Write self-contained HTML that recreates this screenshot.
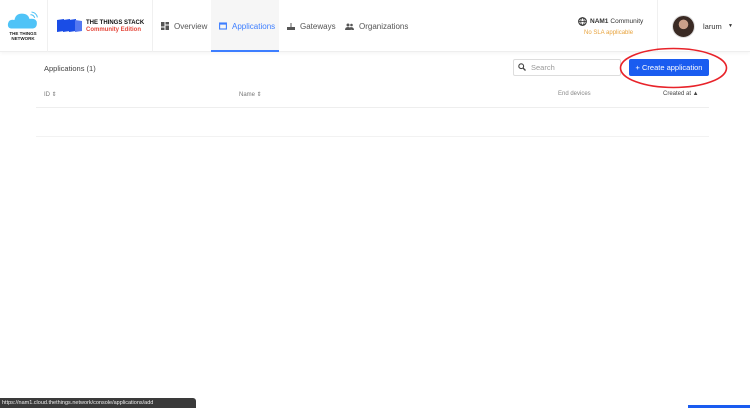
<!DOCTYPE html>
<html><head><meta charset="utf-8"><style>
*{margin:0;padding:0;box-sizing:border-box}
body{width:750px;height:408px;overflow:hidden;background:#fff;font-family:"Liberation Sans",sans-serif;position:relative;color:#333}
.hdr{position:absolute;left:0;top:0;width:750px;height:52px;background:#fff;border-bottom:1px solid #eee;box-shadow:0 1px 4px rgba(0,0,0,.05)}
.vl{position:absolute;top:0;height:52px;width:1px;background:#f0f0f0}
.nav{position:absolute;top:0;height:52px;display:flex;align-items:center;font-size:8px;color:#555}
.abs{position:absolute}
</style></head><body>
<div class="hdr">
  <svg class="abs" style="left:7px;top:10px" width="32" height="20" viewBox="0 0 30 18">
    <path d="M5 17 Q0 17 1 12 Q2 8 7 9 Q8 3 14 3 Q20 3 21 8 Q28 7 28 12 Q28 17 23 17Z" fill="#4fc3f7"/>
    <path d="M22 4 Q25 4 26 7 M23 1.5 Q27.5 2 28.5 6.5" stroke="#4fc3f7" stroke-width="1" fill="none"/>
  </svg>
  <div class="abs" style="left:7px;top:31px;font-size:4.5px;font-weight:bold;line-height:5px;text-align:center;width:32px;color:#222">THE THINGS<br>NETWORK</div>
  <div class="vl" style="left:47px"></div>
  <svg class="abs" style="left:57px;top:19px" width="25" height="13" viewBox="0 0 25 13">
    <path d="M0 1 L7 0 L7 12 L0 13Z M6 1 L13 0 L13 12 L6 13Z M12 1 L19 0 L19 12 L12 13Z" fill="#1a4de6"/>
    <path d="M18 1 L25 2 L25 12 L18 13Z" fill="#5578f0"/>
  </svg>
  <div class="abs" style="left:86px;top:19.5px;font-size:6px;font-weight:bold;color:#111;line-height:7px">THE THINGS STACK<br><span style="color:#e4473b;font-weight:bold">Community Edition</span></div>
  <div class="vl" style="left:152px"></div>
  <div class="nav" style="left:161px"><svg width="8" height="8" viewBox="0 0 8 8" style="margin-right:5px"><rect x="0" y="0" width="3.5" height="4.5" fill="#555"/><rect x="4.5" y="0" width="3.5" height="2.5" fill="#555"/><rect x="0" y="5.5" width="3.5" height="2.5" fill="#555"/><rect x="4.5" y="3.5" width="3.5" height="4.5" fill="#555"/></svg>Overview</div>
  <div class="abs" style="left:211px;top:0;width:68px;height:52px;background:#f6f6f6;border-bottom:2px solid #3d7eff"></div>
  <div class="nav" style="left:219px;color:#3d7eff"><svg width="8" height="8" viewBox="0 0 8 8" style="margin-right:5px"><rect x=".6" y="1" width="6.8" height="6" fill="none" stroke="#3d7eff" stroke-width="1.1"/><rect x=".6" y="1" width="6.8" height="1.6" fill="#3d7eff"/></svg>Applications</div>
  <div class="nav" style="left:287px"><svg width="8" height="8" viewBox="0 0 8 8" style="margin-right:5px"><rect x="0" y="5" width="8" height="3" fill="#555"/><rect x="3.5" y="1" width="1" height="4" fill="#555"/></svg>Gateways</div>
  <div class="nav" style="left:345px"><svg width="9" height="7" viewBox="0 0 9 7" style="margin-right:5px"><circle cx="3" cy="2" r="1.5" fill="#555"/><circle cx="6.5" cy="2" r="1.3" fill="#555"/><path d="M0 7 Q0 4 3 4 Q6 4 6 7Z M5 4.2 Q9 3.8 9 7 L6.5 7Z" fill="#555"/></svg>Organizations</div>
  <div class="abs" style="left:578px;top:17px;font-size:6.5px;font-weight:bold;color:#333;display:flex;align-items:center"><svg width="9" height="9" viewBox="0 0 8 8" style="margin-right:3px"><circle cx="4" cy="4" r="3.4" fill="none" stroke="#333"/><ellipse cx="4" cy="4" rx="1.5" ry="3.4" fill="none" stroke="#333" stroke-width=".7"/><line x1=".6" y1="4" x2="7.4" y2="4" stroke="#333" stroke-width=".7"/></svg>NAM1 <span style="font-weight:normal;margin-left:2px">Community</span></div>
  <div class="abs" style="left:584px;top:30px;font-size:6px;color:#e8a33d">No SLA applicable</div>
  <div class="vl" style="left:657px"></div>
  <div class="abs" style="left:672px;top:15px;width:23px;height:23px;border-radius:50%;background:radial-gradient(circle at 50% 40%,#caa08a 0 28%,#3a2a24 30% 100%);border:1px solid #ddd"></div>
  <div class="abs" style="left:703px;top:22px;font-size:7.5px;color:#333">larum</div>
  <div class="abs" style="left:728px;top:23px;font-size:5px;color:#333">▼</div>
</div>
<div class="abs" style="left:44px;top:64px;font-size:7.5px;color:#444">Applications (1)</div>
<div class="abs" style="left:513px;top:59px;width:108px;height:17px;border:1px solid #ddd;border-radius:2px;font-size:7.5px;color:#999;padding:3px 0 0 17px">Search</div>
<svg class="abs" style="left:518px;top:63px" width="8" height="8" viewBox="0 0 8 8"><circle cx="3.2" cy="3.2" r="2.4" fill="none" stroke="#444" stroke-width="1.1"/><line x1="5" y1="5" x2="7.5" y2="7.5" stroke="#444" stroke-width="1.3"/></svg>
<div class="abs" style="left:629px;top:59px;width:80px;height:17px;background:#1a5cf0;border-radius:2px;color:#fff;font-size:7.5px;line-height:17px;text-align:center">+ Create application</div>
<svg class="abs" style="left:618px;top:47px" width="112" height="43" viewBox="0 0 112 43"><ellipse cx="55.5" cy="21" rx="53" ry="19.5" fill="none" stroke="#e8232a" stroke-width="1.6"/></svg>
<div class="abs" style="left:44px;top:91px;font-size:6px;color:#777">ID ⇕</div>
<div class="abs" style="left:239px;top:91px;font-size:6px;color:#777">Name ⇕</div>
<div class="abs" style="left:558px;top:91px;font-size:6px;color:#888">End devices</div>
<div class="abs" style="left:663px;top:91px;font-size:6px;color:#444">Created at ▲</div>
<div class="abs" style="left:36px;top:107px;width:673px;height:1px;background:#eee"></div>
<div class="abs" style="left:36px;top:136px;width:673px;height:1px;background:#f2f2f2"></div>
<div class="abs" style="left:0;top:398px;width:196px;height:10px;background:#3a3a3a;border-radius:0 3px 0 0;color:#eee;font-size:5.5px;line-height:10px;padding-left:2px">https://nam1.cloud.thethings.network/console/applications/add</div>
<div class="abs" style="left:688px;top:405px;width:62px;height:3px;background:#1a5cf0"></div>
</body></html>
